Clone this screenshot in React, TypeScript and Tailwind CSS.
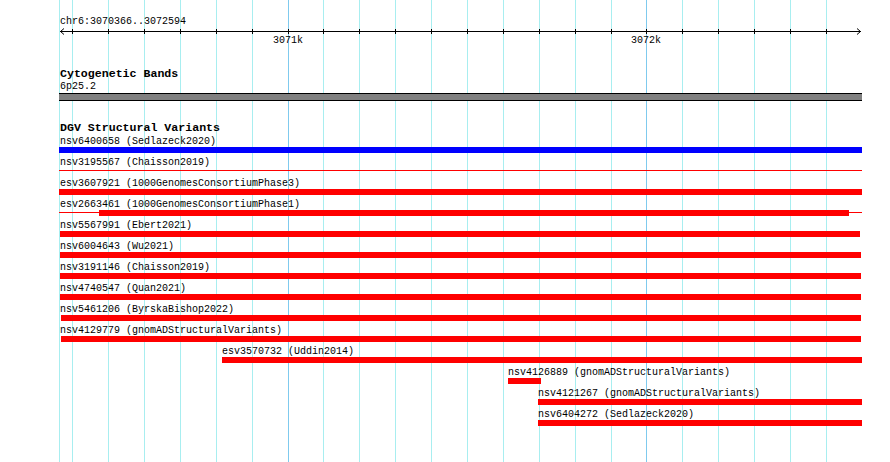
import React from "react";

const gridlines: { x: number; major?: boolean }[] = [
  { x: 59 },
  { x: 72 },
  { x: 108 },
  { x: 144 },
  { x: 180 },
  { x: 216 },
  { x: 252 },
  { x: 288, major: true },
  { x: 323 },
  { x: 359 },
  { x: 395 },
  { x: 431 },
  { x: 467 },
  { x: 503 },
  { x: 539 },
  { x: 575 },
  { x: 611 },
  { x: 646, major: true },
  { x: 682 },
  { x: 718 },
  { x: 754 },
  { x: 790 },
  { x: 826 },
];

type Bar = { x: number; end: number; thin?: boolean; blue?: boolean };
type Row = { label: string; textX: number; bars: Bar[] };

const rows: Row[] = [
  { label: "nsv6400658 (Sedlazeck2020)", textX: 60, bars: [{ x: 59, end: 862, blue: true }] },
  { label: "nsv3195567 (Chaisson2019)", textX: 60, bars: [{ x: 59, end: 862, thin: true }] },
  { label: "esv3607921 (1000GenomesConsortiumPhase3)", textX: 60, bars: [{ x: 59, end: 862 }] },
  {
    label: "esv2663461 (1000GenomesConsortiumPhase1)",
    textX: 60,
    bars: [
      { x: 59, end: 862, thin: true },
      { x: 99, end: 849 },
    ],
  },
  { label: "nsv5567991 (Ebert2021)", textX: 60, bars: [{ x: 60, end: 860 }] },
  { label: "nsv6004643 (Wu2021)", textX: 60, bars: [{ x: 60, end: 861 }] },
  { label: "nsv3191146 (Chaisson2019)", textX: 60, bars: [{ x: 60, end: 861 }] },
  { label: "nsv4740547 (Quan2021)", textX: 60, bars: [{ x: 60, end: 861 }] },
  { label: "nsv5461206 (ByrskaBishop2022)", textX: 60, bars: [{ x: 61, end: 861 }] },
  { label: "nsv4129779 (gnomADStructuralVariants)", textX: 60, bars: [{ x: 61, end: 861 }] },
  { label: "esv3570732 (Uddin2014)", textX: 222, bars: [{ x: 222, end: 862 }] },
  { label: "nsv4126889 (gnomADStructuralVariants)", textX: 508, bars: [{ x: 508, end: 541 }] },
  { label: "nsv4121267 (gnomADStructuralVariants)", textX: 538, bars: [{ x: 538, end: 862 }] },
  { label: "nsv6404272 (Sedlazeck2020)", textX: 538, bars: [{ x: 538, end: 862 }] },
];

const tickXs = gridlines.filter((g) => g.x > 60).map((g) => g.x);

export default function App() {
  return (
    <div className="relative w-[890px] h-[462px] overflow-hidden bg-white text-black font-['Liberation_Mono',monospace]">
      {/* grid */}
      <div className="absolute inset-0">
        {gridlines.map((g) => (
          <div
            key={g.x}
            className={g.major ? "absolute top-0 bottom-0 w-px bg-[#7fcaee]" : "absolute top-0 bottom-0 w-px bg-[#a8eef0]"}
            style={{ left: g.x }}
          />
        ))}
      </div>

      <div className="relative">
        {/* ruler */}
        <div className="h-[47px]">
          <div className="pt-[16px] pl-[60px] text-[10px] leading-[12px] whitespace-nowrap">
            chr6:3070366..3072594
          </div>
          <svg width={890} height={7} className="block">
            <line x1={60} y1={3.5} x2={861} y2={3.5} stroke="#000" strokeWidth={1} />
            {tickXs.map((x) => (
              <line key={x} x1={x + 0.5} y1={1} x2={x + 0.5} y2={6} stroke="#000" strokeWidth={1} />
            ))}
            <polyline points="64,0.5 60.5,3.5 64,6.5" fill="none" stroke="#000" strokeWidth={1} />
            <polyline points="857,0.5 860.5,3.5 857,6.5" fill="none" stroke="#000" strokeWidth={1} />
          </svg>
          <div className="relative h-[12px] text-[10px] leading-[12px]">
            <span className="absolute top-0 left-[273px]">3071k</span>
            <span className="absolute top-0 left-[631px]">3072k</span>
          </div>
        </div>

        {/* cytogenetic bands */}
        <div className="mt-[21px] pl-[60px] text-[11.6px] leading-[12px] font-bold whitespace-nowrap">
          Cytogenetic Bands
        </div>
        <div className="mt-[1px] pl-[60px] text-[10px] leading-[12px]">6p25.2</div>
        <div className="ml-[59px] w-[803px] h-[8px] border-y border-black bg-[#808080]" />

        {/* DGV */}
        <div className="mt-[21px] pl-[60px] text-[11.6px] leading-[12px] font-bold whitespace-nowrap">
          DGV Structural Variants
        </div>
        <div className="mt-[2px] flex flex-col">
          {rows.map((r) => (
            <div key={r.label} className="h-[21px]">
              <div
                className="h-[11px] text-[10px] leading-[11px] whitespace-nowrap"
                style={{ marginLeft: r.textX }}
              >
                {r.label}
              </div>
              <div className="relative h-[6px]">
                {r.bars.map((b, i) =>
                  b.thin ? (
                    <div
                      key={i}
                      className="absolute top-[2px] h-px bg-[#ff0000]"
                      style={{ left: b.x, width: b.end - b.x }}
                    />
                  ) : (
                    <div
                      key={i}
                      className={b.blue ? "absolute top-0 h-[6px] bg-[#0000ff]" : "absolute top-0 h-[6px] bg-[#ff0000]"}
                      style={{ left: b.x, width: b.end - b.x }}
                    />
                  )
                )}
              </div>
            </div>
          ))}
        </div>
      </div>
    </div>
  );
}
